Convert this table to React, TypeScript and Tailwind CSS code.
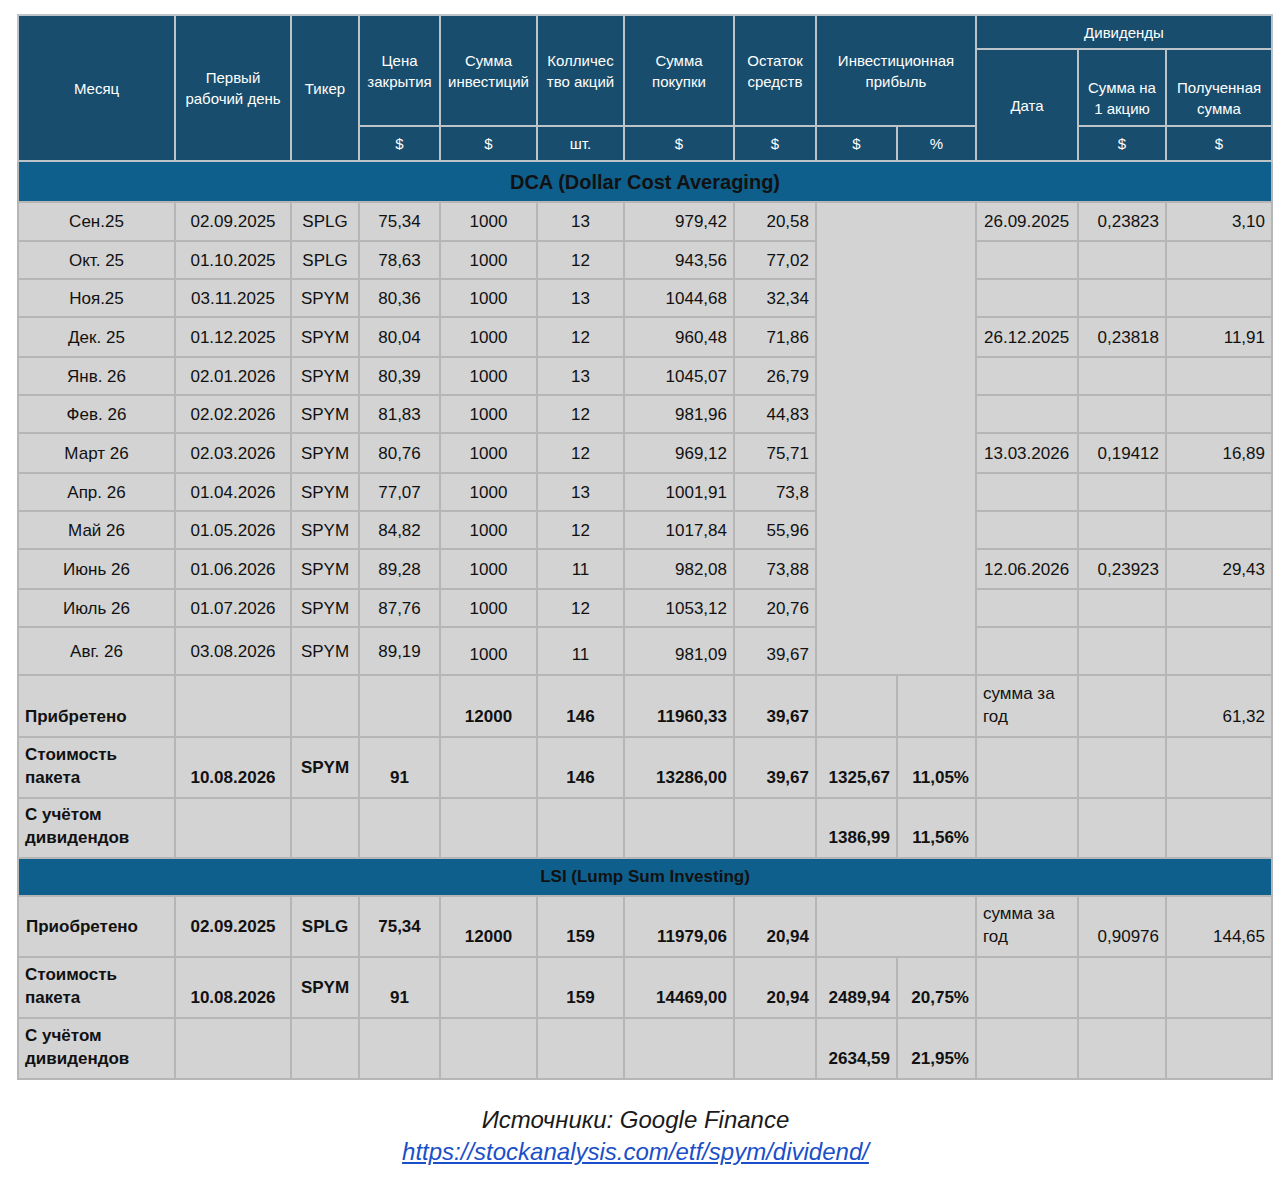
import React from "react";

type Row = {
  m: string;
  d: string;
  t: string;
  p: string;
  inv: string;
  q: string;
  buy: string;
  rest: string;
  dd?: string;
  per?: string;
  got?: string;
  h: string;
};

const dca: Row[] = [
  { m: "Сен.25", d: "02.09.2025", t: "SPLG", p: "75,34", inv: "1000", q: "13", buy: "979,42", rest: "20,58", dd: "26.09.2025", per: "0,23823", got: "3,10", h: "h-[39px]" },
  { m: "Окт. 25", d: "01.10.2025", t: "SPLG", p: "78,63", inv: "1000", q: "12", buy: "943,56", rest: "77,02", h: "h-[38px]" },
  { m: "Ноя.25", d: "03.11.2025", t: "SPYM", p: "80,36", inv: "1000", q: "13", buy: "1044,68", rest: "32,34", h: "h-[38px]" },
  { m: "Дек. 25", d: "01.12.2025", t: "SPYM", p: "80,04", inv: "1000", q: "12", buy: "960,48", rest: "71,86", dd: "26.12.2025", per: "0,23818", got: "11,91", h: "h-[40px]" },
  { m: "Янв. 26", d: "02.01.2026", t: "SPYM", p: "80,39", inv: "1000", q: "13", buy: "1045,07", rest: "26,79", h: "h-[38px]" },
  { m: "Фев. 26", d: "02.02.2026", t: "SPYM", p: "81,83", inv: "1000", q: "12", buy: "981,96", rest: "44,83", h: "h-[38px]" },
  { m: "Март 26", d: "02.03.2026", t: "SPYM", p: "80,76", inv: "1000", q: "12", buy: "969,12", rest: "75,71", dd: "13.03.2026", per: "0,19412", got: "16,89", h: "h-[40px]" },
  { m: "Апр. 26", d: "01.04.2026", t: "SPYM", p: "77,07", inv: "1000", q: "13", buy: "1001,91", rest: "73,8", h: "h-[38px]" },
  { m: "Май 26", d: "01.05.2026", t: "SPYM", p: "84,82", inv: "1000", q: "12", buy: "1017,84", rest: "55,96", h: "h-[38px]" },
  { m: "Июнь 26", d: "01.06.2026", t: "SPYM", p: "89,28", inv: "1000", q: "11", buy: "982,08", rest: "73,88", dd: "12.06.2026", per: "0,23923", got: "29,43", h: "h-[40px]" },
  { m: "Июль 26", d: "01.07.2026", t: "SPYM", p: "87,76", inv: "1000", q: "12", buy: "1053,12", rest: "20,76", h: "h-[38px]" },
  { m: "Авг. 26", d: "03.08.2026", t: "SPYM", p: "89,19", inv: "1000", q: "11", buy: "981,09", rest: "39,67", h: "h-[48px]" },
];

const widths = [157, 116, 68, 81, 97, 87, 110, 82, 81, 79, 102, 88, 106];

const th = "border-2 border-[#bcc4c9] bg-[#184d6d] text-white font-normal text-[15px] leading-[21px] px-1 text-center align-middle";
const td = "border-2 border-[#b6b6b6] bg-[#d3d3d3] text-[17px] leading-[23px] text-[#111]";
const c = `${td} text-center align-middle`;
const r = `${td} text-right pr-[6px] align-middle`;
const l = `${td} text-left pl-[7px] align-middle`;
const cb = `${td} text-center align-bottom pb-[8px] font-bold`;
const rb = `${td} text-right pr-[6px] align-bottom pb-[8px] font-bold`;
const lb = `${td} text-left pl-[6px] align-bottom pb-[8px] font-bold`;
const rn = `${td} text-right pr-[6px] align-bottom pb-[8px]`;
const ln = `${td} text-left pl-[6px] align-bottom pb-[8px]`;
const e = td;

function Section({ title, size, h }: { title: string; size: string; h: string }) {
  return (
    <tr className={h}>
      <td colSpan={13} className={`border-2 border-[#b6b6b6] bg-[#0e5f8c] text-center font-bold text-[#111] ${size}`}>
        {title}
      </td>
    </tr>
  );
}

export default function App() {
  return (
    <div className="min-h-[1187px] bg-white pl-[17px] pt-[14px]" style={{ fontFamily: "'Liberation Sans', Arial, sans-serif" }}>
      <table className="table-fixed border-collapse w-[1254px]">
        <colgroup>
          {widths.map((w, i) => (
            <col key={i} style={{ width: w }} />
          ))}
        </colgroup>
        <thead>
          <tr className="h-[34px]">
            <th rowSpan={3} className={th}>Месяц</th>
            <th rowSpan={3} className={th}>Первый<br />рабочий день</th>
            <th rowSpan={3} className={th}>Тикер</th>
            <th rowSpan={2} className={th}>Цена<br />закрытия</th>
            <th rowSpan={2} className={th}>Сумма<br />инвестиций</th>
            <th rowSpan={2} className={th}>Колличес<br />тво акций</th>
            <th rowSpan={2} className={th}>Сумма<br />покупки</th>
            <th rowSpan={2} className={th}>Остаток<br />средств</th>
            <th rowSpan={2} colSpan={2} className={th}>Инвестиционная<br />прибыль</th>
            <th colSpan={3} className={th}>Дивиденды</th>
          </tr>
          <tr className="h-[77px]">
            <th rowSpan={2} className={th}>Дата</th>
            <th className={`${th} !align-bottom pb-[6px]`}>Сумма на<br />1 акцию</th>
            <th className={`${th} !align-bottom pb-[6px]`}>Полученная<br />сумма</th>
          </tr>
          <tr className="h-[35px]">
            <th className={th}>$</th>
            <th className={th}>$</th>
            <th className={th}>шт.</th>
            <th className={th}>$</th>
            <th className={th}>$</th>
            <th className={th}>$</th>
            <th className={th}>%</th>
            <th className={th}>$</th>
            <th className={th}>$</th>
          </tr>
        </thead>
        <tbody>
          <Section title="DCA (Dollar Cost Averaging)" size="text-[20px]" h="h-[41px]" />
          {dca.map((x, i) => {
            const last = i === dca.length - 1;
            const low = last ? "!align-bottom pb-[8px]" : "";
            return (
              <tr key={x.m} className={x.h}>
                <td className={c}>{x.m}</td>
                <td className={c}>{x.d}</td>
                <td className={c}>{x.t}</td>
                <td className={c}>{x.p}</td>
                <td className={`${c} ${low}`}>{x.inv}</td>
                <td className={`${c} ${low}`}>{x.q}</td>
                <td className={`${r} ${low}`}>{x.buy}</td>
                <td className={`${r} ${low}`}>{x.rest}</td>
                {i === 0 && <td rowSpan={12} colSpan={2} className={e}></td>}
                <td className={l}>{x.dd}</td>
                <td className={r}>{x.per}</td>
                <td className={r}>{x.got}</td>
              </tr>
            );
          })}
          <tr className="h-[62px]">
            <td className={lb}>Прибретено</td>
            <td className={e}></td>
            <td className={e}></td>
            <td className={e}></td>
            <td className={cb}>12000</td>
            <td className={cb}>146</td>
            <td className={rb}>11960,33</td>
            <td className={rb}>39,67</td>
            <td className={e}></td>
            <td className={e}></td>
            <td className={ln}>сумма за год</td>
            <td className={e}></td>
            <td className={rn}>61,32</td>
          </tr>
          <tr className="h-[61px]">
            <td className={lb}>Стоимость пакета</td>
            <td className={cb}>10.08.2026</td>
            <td className={`${c} font-bold`}>SPYM</td>
            <td className={cb}>91</td>
            <td className={e}></td>
            <td className={cb}>146</td>
            <td className={rb}>13286,00</td>
            <td className={rb}>39,67</td>
            <td className={rb}>1325,67</td>
            <td className={rb}>11,05%</td>
            <td className={e}></td>
            <td className={e}></td>
            <td className={e}></td>
          </tr>
          <tr className="h-[60px]">
            <td className={lb}>С учётом дивидендов</td>
            <td className={e}></td>
            <td className={e}></td>
            <td className={e}></td>
            <td className={e}></td>
            <td className={e}></td>
            <td className={e}></td>
            <td className={e}></td>
            <td className={rb}>1386,99</td>
            <td className={rb}>11,56%</td>
            <td className={e}></td>
            <td className={e}></td>
            <td className={e}></td>
          </tr>
          <Section title="LSI (Lump Sum Investing)" size="text-[17px]" h="h-[38px]" />
          <tr className="h-[61px]">
            <td className={`${l} pl-[6px] font-bold`}>Приобретено</td>
            <td className={`${c} font-bold`}>02.09.2025</td>
            <td className={`${c} font-bold`}>SPLG</td>
            <td className={`${c} font-bold`}>75,34</td>
            <td className={cb}>12000</td>
            <td className={cb}>159</td>
            <td className={rb}>11979,06</td>
            <td className={rb}>20,94</td>
            <td colSpan={2} className={e}></td>
            <td className={ln}>сумма за год</td>
            <td className={rn}>0,90976</td>
            <td className={rn}>144,65</td>
          </tr>
          <tr className="h-[61px]">
            <td className={lb}>Стоимость пакета</td>
            <td className={cb}>10.08.2026</td>
            <td className={`${c} font-bold`}>SPYM</td>
            <td className={cb}>91</td>
            <td className={e}></td>
            <td className={cb}>159</td>
            <td className={rb}>14469,00</td>
            <td className={rb}>20,94</td>
            <td className={rb}>2489,94</td>
            <td className={rb}>20,75%</td>
            <td className={e}></td>
            <td className={e}></td>
            <td className={e}></td>
          </tr>
          <tr className="h-[61px]">
            <td className={lb}>С учётом дивидендов</td>
            <td className={e}></td>
            <td className={e}></td>
            <td className={e}></td>
            <td className={e}></td>
            <td className={e}></td>
            <td className={e}></td>
            <td className={e}></td>
            <td className={rb}>2634,59</td>
            <td className={rb}>21,95%</td>
            <td className={e}></td>
            <td className={e}></td>
            <td className={e}></td>
          </tr>
        </tbody>
      </table>
      <div className="mt-[24px] pr-[26px] text-center italic text-[24px] leading-[32px]">
        <p className="text-[#1a1a1a]">Источники: Google Finance</p>
        <a href="#" className="text-[#1a4fc9] underline">https://stockanalysis.com/etf/spym/dividend/</a>
      </div>
    </div>
  );
}
